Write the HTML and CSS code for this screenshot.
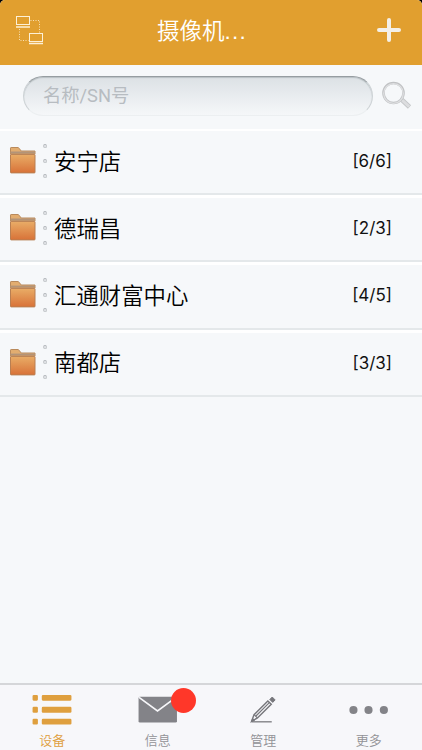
FILE: index.html
```html
<!DOCTYPE html>
<html lang="zh-CN">
<head>
  <meta charset="UTF-8">
  <meta name="viewport" content="width=device-width, initial-scale=1.0">
  <title>摄像机</title>
  <link rel="stylesheet" href="styles.css">
</head>
<body>
  <div class="app">
    <header class="header">
      <svg class="network-icon" viewBox="0 0 28 30" fill="none" stroke="#fdf0d6">
        <rect x=".5" y="1.500" width="13" height="8"/>
        <path d="M0 12h14" stroke-width="1.500"/>
        <rect x="13.500" y="18.500" width="13" height="8"/>
        <path d="M13 28.500h14" stroke-width="1.500"/>
        <path d="M14.500 5.500H23.500v12M3.500 14v11.500h9" stroke-dasharray="1 1.500" opacity=".8"/>
      </svg>
      <h1 class="title">摄像机<span class="dots">...</span></h1>
      <svg class="add-icon" viewBox="0 0 24 24" stroke="#f4f0e8" stroke-width="4" stroke-linecap="round">
        <path d="M2 12h20M12 2v20"/>
      </svg>
    </header>

    <!-- 搜索栏 -->
    <div class="search-bar">
      <input class="search-input" type="text" placeholder="名称/SN号">
      <svg class="search-icon" viewBox="0 0 30 30" fill="none">
        <path d="M19.500 18.500L27.500 26" stroke="#c3c5c7" stroke-width="4.600"/>
        <path d="M20 19L27.200 25.700" stroke="#dcdddf" stroke-width="3"/>
        <circle cx="11.500" cy="12" r="10" stroke="#c0c2c4" stroke-width="2.600"/>
        <circle cx="11.500" cy="12.500" r="9.800" stroke="#dedfe1" stroke-width="1.300"/>
      </svg>
    </div>

    <!-- 设备分组 -->
    <main class="group-list">
      <div class="group-item">
        <svg class="folder-icon" viewBox="0 0 27 28"><use href="#folder"/></svg>
        <span class="handle"><i></i><i></i><i></i></span>
        <span class="group-name">安宁店</span>
        <span class="group-count">[6/6]</span>
      </div>
      <div class="group-item">
        <svg class="folder-icon" viewBox="0 0 27 28"><use href="#folder"/></svg>
        <span class="handle"><i></i><i></i><i></i></span>
        <span class="group-name">德瑞昌</span>
        <span class="group-count">[2/3]</span>
      </div>
      <div class="group-item">
        <svg class="folder-icon" viewBox="0 0 27 28"><use href="#folder"/></svg>
        <span class="handle"><i></i><i></i><i></i></span>
        <span class="group-name">汇通财富中心</span>
        <span class="group-count">[4/5]</span>
      </div>
      <div class="group-item">
        <svg class="folder-icon" viewBox="0 0 27 28"><use href="#folder"/></svg>
        <span class="handle"><i></i><i></i><i></i></span>
        <span class="group-name">南都店</span>
        <span class="group-count">[3/3]</span>
      </div>
    </main>

    <!-- 底部导航 -->
    <nav class="tab-bar">
      <a class="tab active">
        <svg class="tab-icon" viewBox="0 0 42 36" fill="currentColor">
          <rect x="1" y="4" width="5.500" height="6" rx="1.200"/><rect x="10.500" y="4" width="30.500" height="6" rx="1.200"/>
          <rect x="1" y="16.300" width="5.500" height="6" rx="1.200"/><rect x="10.500" y="16.300" width="30.500" height="6" rx="1.200"/>
          <rect x="1" y="28.500" width="5.500" height="6" rx="1.200"/><rect x="10.500" y="28.500" width="30.500" height="6" rx="1.200"/>
        </svg>
        <span class="tab-label">设备</span>
      </a>
      <a class="tab">
        <svg class="tab-icon" viewBox="0 0 42 36">
          <rect x="1" y="6" width="39.500" height="26.500" rx="1.500" fill="#838388"/>
          <path d="M1.500 6.500L20.500 20.500L39.500 6.500" fill="none" stroke="#f7f7fa" stroke-width="1.700"/>
        </svg>
        <span class="badge"></span>
        <span class="tab-label">信息</span>
      </a>
      <a class="tab">
        <svg class="tab-icon" viewBox="0 0 42 36" fill="none" stroke="#77777c">
          <path d="M9.500 31.700H30" stroke-width="1.300"/>
          <path d="M9.300 31.200L11.800 24.300L26 10.200L29.500 13.600L15.300 27.700Z" stroke-width="1.500"/>
          <path d="M13.500 26L27.500 12M11.800 24.300L15.300 27.700" stroke-width="1.200"/>
          <path d="M9.300 31.200L10.300 28.300L12.200 30.100Z" fill="#77777c"/>
          <path d="M30.500 6.200L33.500 9.200L31 11.700L28 8.700Z" fill="#77777c" stroke-linejoin="round"/>
        </svg>
        <span class="tab-label">管理</span>
      </a>
      <a class="tab">
        <svg class="tab-icon" viewBox="0 0 42 36" fill="#838388">
          <circle cx="5" cy="19.500" r="4.200"/>
          <circle cx="20.500" cy="19.500" r="4.200"/>
          <circle cx="36.300" cy="19.500" r="4.200"/>
        </svg>
        <span class="tab-label">更多</span>
      </a>
    </nav>
  </div>

  <svg class="symbols">
    <defs>
      <linearGradient id="folder-front" x1="0" y1="0" x2="0" y2="1">
        <stop offset="0" stop-color="#e9ad67"/>
        <stop offset="1" stop-color="#d87238"/>
      </linearGradient>
      <symbol id="folder" viewBox="0 0 27 28">
        <path d="M1.500 8V2.100Q1.500 1.500 2.100 1.500H9.300L12.300 5H26V8Z" fill="#e2ad70" stroke="#b98a5c"/>
        <path d="M1.500 6.500H26" stroke="#b39478" stroke-width="1.800"/>
        <rect x="1.500" y="8.400" width="24.500" height="18.500" rx=".6" fill="url(#folder-front)" stroke="#b97f52"/>
      </symbol>
    </defs>
  </svg>
</body>
</html>
```
FILE: styles.css
```css
* {
  box-sizing: border-box;
}

body {
  margin: 0;
  background-color: #000;
  font-family: "Liberation Sans", "Noto Sans CJK SC", sans-serif;
}

.app {
  display: flex;
  flex-direction: column;
  height: 100vh;
  overflow: hidden;
  background-color: #f6f8fa;
  border-radius: 5px 5px 0 0;
}

.header {
  display: flex;
  align-items: center;
  height: 64.5px;
  padding: 0 21px 4px 16px;
  background-color: #e19f2f;
}

.network-icon {
  width: 28px;
  height: 30px;
}

.title {
  flex: 1;
  margin: 0;
  padding: 0 0 2px 113px;
  color: #fff;
  font-size: 22.5px;
  font-weight: 350;
}

.dots {
  letter-spacing: 1.3px;
}

.add-icon {
  width: 24px;
  height: 24px;
}

.search-bar {
  display: flex;
  align-items: center;
  height: 64.5px;
  padding: 0 10px 2px 23px;
  gap: 9px;
}

.search-input {
  width: 350px;
  height: 40px;
  padding: 0 19px;
  border: 1px solid #cdd2d5;
  border-top-color: #969da1;
  border-bottom-color: #eceff1;
  border-radius: 20px;
  background: linear-gradient(#dce1e5, #f5f7f9);
  box-shadow: inset 0 1px 1px #b9c0c4;
  font-family: Roboto, "Noto Sans CJK SC", sans-serif;
  font-size: 18.3px;
}

.search-input::placeholder {
  color: #b7bcc1;
}

.search-icon {
  width: 30px;
  height: 30px;
}

.group-list {
  flex: 1;
}

.group-item {
  display: flex;
  align-items: center;
  height: 67.3px;
  padding: 0 30px 1px 9px;
  border-top: 3px solid #fff;
  border-bottom: 2px solid #e4e8ea;
}

.group-item:first-child {
  height: 66px;
  border-top-width: 2px;
}

.folder-icon {
  width: 27px;
  height: 28px;
  margin-bottom: 3px;
}

.handle {
  display: flex;
  flex-direction: column;
  gap: 11px;
  margin: 0 7px 2px 7px;
}

.handle i {
  width: 4px;
  height: 4px;
  border: 1px solid #c3c7ca;
  border-top-color: #b0b5b9;
  border-radius: 50%;
  background-color: #dfe2e5;
}

.group-name {
  flex: 1;
  padding-bottom: 4px;
  color: #000;
  font-size: 22.4px;
  font-weight: 350;
}

.group-count {
  padding-bottom: 1px;
  color: #111;
  font-family: Inter, sans-serif;
  font-size: 17px;
}

.tab-bar {
  display: flex;
  height: 67px;
  border-top: 2px solid #d5d6d9;
  background-color: #f7f7fa;
}

.tab {
  position: relative;
  display: flex;
  flex: 1;
  flex-direction: column;
  align-items: center;
  padding: 6px 1px 0 0;
  color: #929296;
}

.tab.active {
  color: #df9f3e;
}

.tab-icon {
  width: 42px;
  height: 36px;
}

.tab-label {
  margin-top: 6px;
  font-size: 13px;
  font-weight: 350;
  line-height: 18px;
}

.badge {
  position: absolute;
  top: 3px;
  left: 65px;
  width: 25px;
  height: 25px;
  border-radius: 50%;
  background-color: #ff3729;
}

.symbols {
  position: absolute;
  width: 0;
  height: 0;
}
```
